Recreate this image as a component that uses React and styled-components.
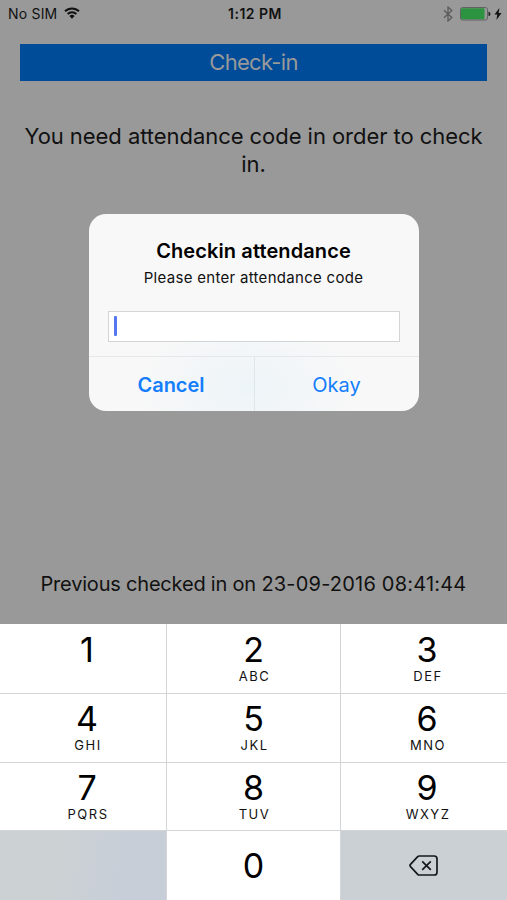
import React from 'react';
import styled, { createGlobalStyle } from 'styled-components';

const GlobalStyle = createGlobalStyle`
  * {
    box-sizing: border-box;
  }

  body {
    margin: 0;
    font-family: Inter, 'Liberation Sans', sans-serif;
    color: #000;
  }
`;

const Phone = styled.div`
  position: relative;
  display: flex;
  flex-direction: column;
  width: 507px;
  height: 900px;
  overflow: hidden;
  background: #999;
`;

const StatusBar = styled.header`
  display: grid;
  grid-template-columns: 1fr auto 1fr;
  align-items: center;
  height: 28px;
  padding: 0 5px 0 8px;
`;

const Carrier = styled.div`
  display: flex;
  align-items: center;
  gap: 7px;
  padding-bottom: 2px;
  font-size: 14px;
  letter-spacing: 0.2px;
  color: #111;
`;

const Clock = styled.div`
  padding-bottom: 2px;
  font-size: 14px;
  font-weight: 600;
  letter-spacing: 0.5px;
  color: #111;
`;

const Indicators = styled.div`
  display: flex;
  align-items: center;
  justify-content: flex-end;
  gap: 3px;
`;

const CheckInButton = styled.button`
  flex: none;
  height: 37px;
  margin: 15.5px 20px 0;
  padding: 0;
  border: 0;
  background: #004c99;
  color: #999;
  font: 400 22px Inter, 'Liberation Sans', sans-serif;
  letter-spacing: -0.7px;
`;

const Message = styled.p`
  margin: 41px 20px 0;
  font-size: 22px;
  line-height: 28px;
  letter-spacing: -0.05px;
  text-align: center;
  color: #111;
`;

const LastCheckIn = styled.p`
  margin: auto 0 26px;
  font-size: 20px;
  line-height: 28px;
  letter-spacing: -0.2px;
  text-align: center;
  color: #111;
`;

const Timestamp = styled.time`
  letter-spacing: 0.2px;
`;

const Overlay = styled.div`
  position: absolute;
  inset: 0 0 276px;
  display: flex;
  align-items: center;
  justify-content: center;
`;

const Dialog = styled.div`
  display: flex;
  flex-direction: column;
  width: 330px;
  height: 197px;
  overflow: hidden;
  border-radius: 17px;
  background: radial-gradient(ellipse 110px 70px at 48% 88%, #edf4f8, #f8f8f8);
`;

const DialogTitle = styled.h1`
  margin: 23px 0 0;
  font-size: 20px;
  font-weight: 600;
  line-height: 28px;
  letter-spacing: 0.1px;
  text-align: center;
`;

const DialogText = styled.p`
  margin: 3px 0 0;
  font-size: 15px;
  line-height: 20px;
  letter-spacing: 0.3px;
  text-align: center;
  color: #111;
`;

const CodeField = styled.div`
  display: flex;
  align-items: center;
  height: 31px;
  margin: 23px 19px 0;
  padding-left: 5px;
  border: 1px solid #d2d4d6;
  background: #fff;
`;

const Caret = styled.span`
  width: 3px;
  height: 20px;
  border-radius: 1px;
  background: #5577f0;
`;

const Actions = styled.div`
  display: grid;
  grid-template-columns: 1fr 1fr;
  flex: 1;
  margin-top: 14px;
  border-top: 1px solid #e4e8ea;
`;

const Action = styled.button`
  padding: 2px 0 0;
  border: 0;
  border-left: ${({ $divided }) => ($divided ? '1px solid #e0e6e9' : '0')};
  background: transparent;
  color: #147efb;
  font: ${({ $bold }) => ($bold ? 600 : 400)} 20px Inter, 'Liberation Sans', sans-serif;
`;

const Keypad = styled.div`
  display: grid;
  flex: none;
  grid-template-columns: 166px 173px 166px;
  grid-template-rows: 69px 68px 67px 69px;
  gap: 1px;
  height: 276px;
  background: #d3d5d7;
`;

const Key = styled.button`
  display: flex;
  flex-direction: column;
  align-items: center;
  justify-content: ${({ $single }) => ($single ? 'center' : 'flex-start')};
  padding: ${({ $single, $top }) => ($single ? '0' : `${$top}px 0 0`)};
  padding-left: ${({ $shift }) => $shift || 0}px;
  border: 0;
  background: #fff;
  color: #000;
  font-family: Inter, 'Liberation Sans', sans-serif;
`;

const BlankKey = styled.div`
  background: linear-gradient(100deg, #ccd1d4 35%, #c8ced8 75%);
`;

const DeleteKey = styled(Key)`
  background: #cbd0d5;
`;

const Digit = styled.span`
  font-size: 34px;
  line-height: 36px;
`;

const Letters = styled.span`
  padding-left: 2px;
  font-size: 13px;
  line-height: 16px;
  letter-spacing: 1.5px;
  color: #111;
`;

const keys = [
  { digit: '1', letters: '', shift: 8, top: 8 },
  { digit: '2', letters: 'ABC', top: 8 },
  { digit: '3', letters: 'DEF', shift: 6, top: 8 },
  { digit: '4', letters: 'GHI', shift: 8 },
  { digit: '5', letters: 'JKL' },
  { digit: '6', letters: 'MNO', shift: 6 },
  { digit: '7', letters: 'PQRS', shift: 8 },
  { digit: '8', letters: 'TUV' },
  { digit: '9', letters: 'WXYZ', shift: 6 },
];

const WifiIcon = () => (
  <svg width="16" height="12" viewBox="0 0 16 12" fill="none" stroke="#111" strokeWidth="1.9">
    <path d="M1 4.3a10 10 0 0 1 14 0M3.6 7a6.3 6.3 0 0 1 8.8 0" />
    <path d="M5.4 9a3.8 3.8 0 0 1 5.2 0L8 11.7z" fill="#111" stroke="none" />
  </svg>
);

const BluetoothIcon = () => (
  <svg width="14" height="16" viewBox="0 0 14 16" fill="none" stroke="#5c5c5c" strokeWidth="1.3">
    <path d="M1 4.3 8.8 11.4 5 15V1l3.8 3.6L1 11.7" />
  </svg>
);

const BatteryIcon = () => (
  <svg width="31" height="14" viewBox="0 0 31 14">
    <rect x="0.5" y="0.5" width="27" height="12.5" rx="2" fill="none" stroke="#626262" />
    <rect x="1" y="1.2" width="23.5" height="11" rx="1" fill="#2c9440" />
    <path d="M28.5 4.5q2 .6 2 2.4t-2 2.3z" fill="#222" />
  </svg>
);

const BoltIcon = () => (
  <svg width="8" height="12" viewBox="0 0 8 12">
    <path d="M5.4 0 .5 6.4h2.8L2.4 12l5.1-7H4.6z" fill="#111" />
  </svg>
);

const DeleteIcon = () => (
  <svg width="30" height="24" viewBox="0 0 30 24" fill="none" stroke="#15181b" strokeWidth="1.7" strokeLinejoin="round">
    <path d="M10.2 2h15a2.8 2.8 0 0 1 2.8 2.8v13.4a2.8 2.8 0 0 1-2.8 2.8h-15q-.8 0-1.5-.7L1.5 12.6q-1-1.1 0-2.2l7.2-7.7q.7-.7 1.5-.7z" />
    <path d="m13.2 7.3 8.6 8.6M21.8 7.3l-8.6 8.6" />
  </svg>
);

const App = () => {
  return (
    <>
      <GlobalStyle />
      <Phone>
        <StatusBar>
          <Carrier>
            No SIM
            <WifiIcon />
          </Carrier>
          <Clock>1:12 PM</Clock>
          <Indicators>
            <BluetoothIcon />
            <BatteryIcon />
            <BoltIcon />
          </Indicators>
        </StatusBar>

        <CheckInButton>Check-in</CheckInButton>
        <Message>You need attendance code in order to check in.</Message>
        <LastCheckIn>
          Previous checked in on <Timestamp>23-09-2016 08:41:44</Timestamp>
        </LastCheckIn>

        <Keypad>
          {keys.map(({ digit, letters, shift, top = 7 }) => (
            <Key key={digit} $shift={shift} $top={top}>
              <Digit>{digit}</Digit>
              {letters && <Letters>{letters}</Letters>}
            </Key>
          ))}
          <BlankKey />
          <Key $single>
            <Digit>0</Digit>
          </Key>
          <DeleteKey $single aria-label="Delete">
            <DeleteIcon />
          </DeleteKey>
        </Keypad>

        <Overlay>
          <Dialog role="dialog">
            <DialogTitle>Checkin attendance</DialogTitle>
            <DialogText>Please enter attendance code</DialogText>
            <CodeField>
              <Caret />
            </CodeField>
            <Actions>
              <Action $bold>Cancel</Action>
              <Action $divided>Okay</Action>
            </Actions>
          </Dialog>
        </Overlay>
      </Phone>
    </>
  );
};

export default App;
